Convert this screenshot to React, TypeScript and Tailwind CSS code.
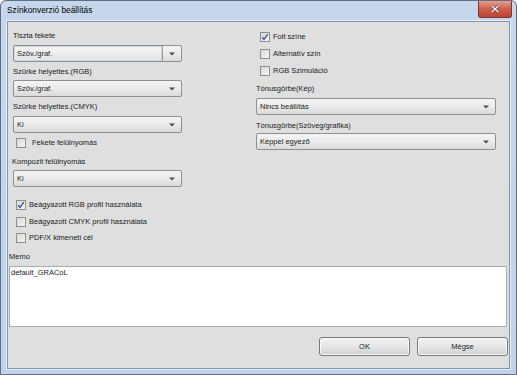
import type { ReactNode } from 'react'

/* Színkonverzió beállítás — Win7-style dialog */

const font = { fontFamily: '"Liberation Sans", Arial, sans-serif' }

function Label({ children, className = '' }: { children: ReactNode; className?: string }) {
  return <div className={`h-[10px] leading-[10px] whitespace-nowrap ${className}`}>{children}</div>
}

function Arrow() {
  return (
    <svg width="6" height="4" viewBox="0 0 6 4">
      <path d="M0 0.5 L6 0.5 L3 3.5 Z" fill="#4d4d4d" />
    </svg>
  )
}

function Combo({ text, w, split = false, className = '' }: { text: string; w: string; split?: boolean; className?: string }) {
  return (
    <div className={`flex h-[17px] items-stretch rounded-[2px] border border-[#8f9090] bg-linear-to-b from-[#f4f4f4] via-[#ebebeb] to-[#dadada] ${w} ${className}`}>
      <div className={`flex flex-1 items-center pl-[3px] ${split ? 'border-r border-[#9a9a9a] bg-linear-to-b from-[#f6f6f6] to-[#e2e2e2] shadow-[inset_0_0_0_1px_#c8d6e6]' : ''}`}>
        {text}
      </div>
      <div className="flex w-[18px] items-center justify-center">
        <Arrow />
      </div>
    </div>
  )
}

function Check({ label, checked = false, gap = 'gap-[3px]', className = '' }: { label: string; checked?: boolean; gap?: string; className?: string }) {
  return (
    <div className={`flex h-[10px] items-center ${gap} ${className}`}>
      <span className="flex h-[10px] w-[10px] items-center justify-center border border-[#8e8f8f] bg-linear-to-br from-[#d6d6d6] to-[#f7f7f7]">
        {checked && (
          <svg width="8" height="8" viewBox="0 0 8 8">
            <path d="M1.2 4.3 L3 6.4 L6.8 1.2" fill="none" stroke="#3d5796" strokeWidth="1.4" />
          </svg>
        )}
      </span>
      <span className="leading-[10px] whitespace-nowrap">{label}</span>
    </div>
  )
}

function Button({ children }: { children: ReactNode }) {
  return (
    <div className="flex h-[19px] w-[91px] items-center justify-center rounded-[3px] border border-[#7a7a7a] bg-linear-to-b from-[#f2f2f2] via-[#e6e6e6] to-[#d0d0d0] shadow-[inset_0_0_0_1px_#f8f8f8]">
      {children}
    </div>
  )
}

export default function App() {
  return (
    <div className="h-[375px] w-[517px] bg-white text-[7.5px] text-[#1b1b1b]" style={font}>
      <div className="flex h-full w-full flex-col rounded-t-[6px] border border-[#5d6d82] bg-linear-to-b from-[#c6d7ec] to-[#bdd2ec]">
        {/* Title bar */}
        <div className="flex h-[20px] items-start justify-between pl-[6px] pr-[4px]">
          <span className="mt-[4px] text-[8.3px] leading-[10px] text-black">Színkonverzió beállítás</span>
          <div className="flex h-[17px] w-[34px] items-center justify-center rounded-b-[3px] border border-t-0 border-[#7a3a32] bg-linear-to-b from-[#e3a090] via-[#cf5d4a] to-[#c0432f]">
            <svg width="10" height="8" viewBox="0 0 10 8">
              <path d="M1.5 0.8 L8.5 7.2 M8.5 0.8 L1.5 7.2" stroke="#5a2a22" strokeWidth="2.6" />
              <path d="M1.5 0.8 L8.5 7.2 M8.5 0.8 L1.5 7.2" stroke="#ffffff" strokeWidth="1.5" />
            </svg>
          </div>
        </div>

        {/* Client area */}
        <div className="mx-[6px] mb-[5px] flex flex-1 flex-col border border-[#8295ad] bg-[#dfdfdf] shadow-[0_0_0_1px_#e4eefa]">
          <div className="flex">
            {/* Left column */}
            <div className="flex w-[248px] flex-col pl-[5px]">
              <Label className="mt-[9px]">Tiszta fekete</Label>
              <Combo text="Szöv./graf." w="w-[169px]" split className="mt-[4px]" />
              <Label className="mt-[5px]">Szürke helyettes.(RGB)</Label>
              <Combo text="Szöv./graf." w="w-[169px]" className="mt-[3px]" />
              <Label className="mt-[5px]">Szürke helyettes.(CMYK)</Label>
              <Combo text="Ki" w="w-[169px]" className="mt-[4px]" />
              <Check label="Fekete felülnyomás" gap="gap-[6px]" className="ml-[3px] mt-[5px]" />
              <Label className="-ml-[1px] mt-[9px]">Kompozit felülnyomás</Label>
              <Combo text="Ki" w="w-[169px]" className="mt-[3px]" />
              <Check label="Beágyazott RGB profil használata" checked className="ml-[3px] mt-[13px]" />
              <Check label="Beágyazott CMYK profil használata" className="ml-[3px] mt-[7px]" />
              <Check label="PDF/X kimeneti cél" className="ml-[3px] mt-[6px]" />
            </div>

            {/* Right column */}
            <div className="flex flex-col">
              <Check label="Folt színe" checked className="ml-[4px] mt-[10px]" />
              <Check label="Alternatív szín" className="ml-[4px] mt-[7px]" />
              <Check label="RGB Szimuláció" className="ml-[4px] mt-[7px]" />
              <Label className="mt-[8px]">Tónusgörbe(Kép)</Label>
              <Combo text="Nincs beállítás" w="w-[240px]" className="mt-[4px]" />
              <Label className="mt-[6px]">Tónusgörbe(Szöveg/grafika)</Label>
              <Combo text="Képpel egyező" w="w-[240px]" className="mt-[2px]" />
            </div>
          </div>

          {/* Memo */}
          <Label className="ml-[1px] mt-[9px]">Memo</Label>
          <div className="ml-[1px] mr-[2px] mt-[4px] h-[61px] border border-[#a9abb0] bg-white px-[1px] pt-[1px] leading-[10px]">
            default_GRACoL
          </div>

          {/* Buttons */}
          <div className="mr-[1px] mt-[10px] flex justify-end gap-[7px]">
            <Button>OK</Button>
            <Button>Mégse</Button>
          </div>
        </div>
      </div>
    </div>
  )
}
